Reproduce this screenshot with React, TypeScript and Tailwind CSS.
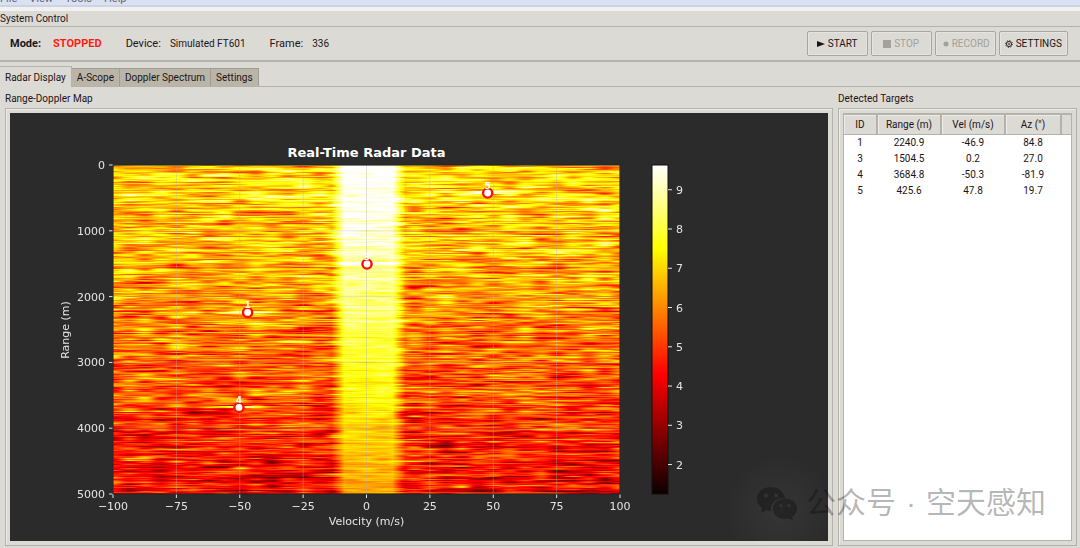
import { useLayoutEffect, useRef, type ReactNode } from "react";

const menus = ["File", "View", "Tools", "Help"];
const tabs = ["Radar Display", "A-Scope", "Doppler Spectrum", "Settings"];

const targets = [
  { id: 1, range: 2240.9, vel: -46.9, az: 84.8 },
  { id: 3, range: 1504.5, vel: 0.2, az: 27.0 },
  { id: 4, range: 3684.8, vel: -50.3, az: -81.9 },
  { id: 5, range: 425.6, vel: 47.8, az: 19.7 },
];

// plot area inside the 818x428 figure
const PLOT = { x: 103, y: 52, w: 507, h: 329 };
const V_MIN = 1.25;
const V_MAX = 9.63;

const xOf = (vel: number) => PLOT.x + ((vel + 100) / 200) * PLOT.w;
const yOf = (range: number) => PLOT.y + (range / 5000) * PLOT.h;
const barY = (v: number) => PLOT.y + ((V_MAX - v) / (V_MAX - V_MIN)) * PLOT.h;

const clamp = (n: number) => Math.max(0, Math.min(1, n));

// "hot" colour map
function hot(v: number) {
  const t = clamp((v - V_MIN) / (V_MAX - V_MIN));
  return [
    255 * clamp(0.04 + (t / 0.365) * 0.96),
    255 * clamp((t - 0.365) / 0.381),
    255 * clamp((t - 0.746) / 0.254),
  ];
}

function makeRandom(seed: number) {
  let s = seed;
  const next = () => {
    s = (s + 0x6d2b79f5) | 0;
    let t = Math.imul(s ^ (s >>> 15), 1 | s);
    t = (t + Math.imul(t ^ (t >>> 7), 61 | t)) ^ t;
    return ((t ^ (t >>> 14)) >>> 0) / 4294967296;
  };
  return () => next() + next() + next() + next() - 2;
}

function sample(row: number[], pos: number) {
  const i = Math.floor(pos);
  const f = pos - i;
  const s = f * f * (3 - 2 * f);
  return row[i] * (1 - s) + row[i + 1] * s;
}

function drawMap(ctx: CanvasRenderingContext2D) {
  const { w, h } = PLOT;
  const rand = makeRandom(336);
  const img = ctx.createImageData(w, h);
  let fine = Array.from({ length: 34 }, rand);
  let wide = Array.from({ length: 16 }, rand);

  for (let y = 0; y < h; y++) {
    const depth = y / h;
    const rowNoise = rand() * 0.5;
    fine = fine.map((p) => p * 0.45 + rand() * 1.05);
    wide = wide.map((p) => p * 0.3 + rand() * 0.8);
    for (let x = 0; x < w; x++) {
      const noise = sample(fine, (x / w) * 32) + sample(wide, (x / w) * 13 + 0.4) + rowNoise;
      const band = clamp((x - 218) / 13) * clamp((292 - x) / 13);
      const floor = 7.1 - 2.95 * Math.pow(depth, 1.3);
      const clutter = 9.8 - 3.5 * Math.pow(depth, 1.15);
      let v = (floor + noise) * (1 - band) + (clutter + noise * 0.38) * band;
      for (const t of targets) {
        const dx = x + PLOT.x - xOf(t.vel);
        const dy = y + PLOT.y - yOf(t.range) + 1;
        if (Math.abs(dy) < 1.2) v += 3.2 * Math.exp(-(dx * dx) / 700);
      }
      const [r, g, b] = hot(v);
      const k = (y * w + x) * 4;
      img.data[k] = r;
      img.data[k + 1] = g;
      img.data[k + 2] = b;
      img.data[k + 3] = 255;
    }
  }
  ctx.putImageData(img, 0, 0);
}

function RadarChart() {
  const ref = useRef<HTMLCanvasElement>(null);

  useLayoutEffect(() => {
    const ctx = ref.current?.getContext("2d");
    if (ctx) drawMap(ctx);
  }, []);

  const velTicks = [-100, -75, -50, -25, 0, 25, 50, 75, 100];
  const rangeTicks = [0, 1000, 2000, 3000, 4000, 5000];
  const bottom = PLOT.y + PLOT.h;

  return (
    <svg
      viewBox="0 0 818 428"
      className="block w-full h-auto font-['DejaVu_Sans',sans-serif] text-[11px]"
      fill="#e4e4e4"
      role="img"
      aria-label="Real-Time Radar Data"
    >
      <defs>
        <linearGradient id="hot" x1="0" y1="1" x2="0" y2="0">
          <stop offset="0" stopColor="#0b0000" />
          <stop offset="0.365" stopColor="#ff0000" />
          <stop offset="0.746" stopColor="#ffff00" />
          <stop offset="1" stopColor="#ffffff" />
        </linearGradient>
      </defs>

      <text x={xOf(0)} y="44" textAnchor="middle" fill="#fff" className="text-[13px] font-bold">
        Real-Time Radar Data
      </text>

      <foreignObject x={PLOT.x} y={PLOT.y} width={PLOT.w} height={PLOT.h}>
        <canvas ref={ref} width={PLOT.w} height={PLOT.h} className="block" />
      </foreignObject>

      {velTicks.map((v) => (
        <g key={v}>
          <path d={`M${xOf(v)} ${PLOT.y}V${bottom}`} stroke="#b0b0b0" strokeOpacity="0.4" />
          <path d={`M${xOf(v)} ${bottom}v4`} stroke="#e4e4e4" />
          <text x={xOf(v)} y={bottom + 16} textAnchor="middle">
            {String(v).replace("-", "−")}
          </text>
        </g>
      ))}
      {rangeTicks.map((r) => (
        <g key={r}>
          <path d={`M${PLOT.x} ${yOf(r)}h${PLOT.w}`} stroke="#b0b0b0" strokeOpacity="0.3" />
          <path d={`M${PLOT.x} ${yOf(r)}h-4`} stroke="#e4e4e4" />
          <text x={PLOT.x - 8} y={yOf(r) + 4} textAnchor="end">
            {r}
          </text>
        </g>
      ))}
      <rect x={PLOT.x} y={PLOT.y} width={PLOT.w} height={PLOT.h} fill="none" stroke="#111" />

      <text x={xOf(0)} y={bottom + 31} textAnchor="middle">
        Velocity (m/s)
      </text>
      <text transform="translate(59 217) rotate(-90)" textAnchor="middle">
        Range (m)
      </text>

      {targets.map((t) => (
        <g key={t.id}>
          <circle cx={xOf(t.vel)} cy={yOf(t.range)} r="4.6" fill="#fff" stroke="#f5140c" strokeWidth="2.4" />
          <text x={xOf(t.vel)} y={yOf(t.range) - 4} textAnchor="middle" fill="#fff" className="text-[9px] font-bold">
            {t.id}
          </text>
        </g>
      ))}

      <rect x="642" y={PLOT.y} width="16" height={PLOT.h} fill="url(#hot)" stroke="#111" />
      {[2, 3, 4, 5, 6, 7, 8, 9].map((v) => (
        <g key={v}>
          <path d={`M658 ${barY(v)}h4`} stroke="#e4e4e4" />
          <text x="666" y={barY(v) + 4}>
            {v}
          </text>
        </g>
      ))}
    </svg>
  );
}

function ControlButton({ icon, label, disabled }: { icon: ReactNode; label: string; disabled?: boolean }) {
  return (
    <button
      type="button"
      disabled={disabled}
      className="flex h-[25px] min-w-[61px] items-center justify-center gap-[3px] rounded-xs border border-[#a9a69e] px-[5px] shadow-[inset_0_0_0_1px_#e6e4df] disabled:text-[#a3a199]"
    >
      <svg viewBox="0 0 8 8" className="size-2" fill="currentColor" aria-hidden="true">
        {icon}
      </svg>
      {label}
    </button>
  );
}

const gear = (
  <g fill="none" stroke="currentColor">
    <circle cx="4" cy="4" r="2.6" strokeWidth="0.9" />
    <circle cx="4" cy="4" r="0.9" strokeWidth="0.6" />
    <circle cx="4" cy="4" r="3.500" strokeWidth="0.9" strokeDasharray="1.1 1.649" />
  </g>
);

function Targets() {
  const head = "h-5 border-r-2 border-b border-[#b5b2aa] bg-[#dcdad5] font-normal shadow-[inset_1px_1px_0_#eeece8]";
  return (
    <div className="flex flex-1 flex-col border border-t-2 border-[#b5b2aa] bg-white">
      <table className="w-full table-fixed border-separate border-spacing-0 text-center">
        <colgroup>
          <col className="w-[34px]" />
          <col className="w-16" />
          <col className="w-16" />
          <col className="w-14" />
          <col />
        </colgroup>
        <thead>
          <tr>
            <th className={head}>ID</th>
            <th className={head}>Range (m)</th>
            <th className={head}>Vel (m/s)</th>
            <th className={head}>Az (°)</th>
            <td className="border-b border-[#b5b2aa] bg-[#dcdad5]" />
          </tr>
        </thead>
        <tbody>
          {targets.map((t) => (
            <tr key={t.id} className="h-4 *:pr-[2px]">
              <td>{t.id}</td>
              <td>{t.range.toFixed(1)}</td>
              <td>{t.vel.toFixed(1)}</td>
              <td>{t.az.toFixed(1)}</td>
              <td />
            </tr>
          ))}
        </tbody>
      </table>
    </div>
  );
}

function Watermark() {
  return (
    <div className="pointer-events-none absolute right-[34px] bottom-[28px] flex items-center gap-2 text-black/30">
      <div className="absolute -left-8 -top-8 size-28 bg-radial from-white/5 to-transparent to-70%" />
      <svg viewBox="0 0 42 34" className="relative h-[34px] w-[42px]" fill="currentColor">
        <path
          fillRule="evenodd"
          d="M15 1C7 1 1 6.300 1 13c0 3.800 2 7 5 9.200L5 27l5.200-2.800c1.600.5 3.200.8 5 .8C14 17.500 20 12 28 12h1.300C28 5.600 22 1 15 1Zm-5 6.500a2 2 0 1 1 0 4 2 2 0 0 1 0-4Zm10 0a2 2 0 1 1 0 4 2 2 0 0 1 0-4Z"
        />
        <path
          fillRule="evenodd"
          d="M29 12.500c-7 0-12 4.500-12 10.200s5 10.300 12 10.300c1.500 0 2.800-.2 4-.5l4.200 2.200-1-3.700c2.900-1.800 4.800-4.800 4.800-8.300 0-5.700-5-10.200-12-10.200Zm-4 5.500a1.600 1.600 0 1 1 0 3.200 1.600 1.600 0 0 1 0-3.200Zm8 0a1.600 1.600 0 1 1 0 3.200 1.600 1.600 0 0 1 0-3.200Z"
        />
      </svg>
      <span className="relative flex gap-[10px] font-['Liberation_Sans','Noto_Sans_CJK_SC',sans-serif] text-[30px] leading-[30px]">
        <span>公众号</span>
        <span>·</span>
        <span>空天感知</span>
      </span>
    </div>
  );
}

export default function App() {
  const group = "flex border border-[#b5b2aa] p-1 shadow-[inset_1px_1px_0_#eeece8]";
  return (
    <div className="relative flex min-h-screen flex-col overflow-hidden bg-[#dcdad5] font-[Roboto,sans-serif] text-[10px] leading-3 text-[#1c1418]">
      <nav className="flex h-[5px] items-end gap-3 overflow-hidden bg-[#dae1f2] text-[11px] text-[#667]">
        {menus.map((m) => (
          <button key={m} type="button">
            {m}
          </button>
        ))}
      </nav>
      <div className="h-[6px] border-t-2 border-[#cdd3e2] bg-[#f1f1f1]" />

      <h2 className="flex h-[15px] items-center">System Control</h2>
      <div className="flex h-9 items-center border-t border-b-2 border-[#b5b2aa] pr-3 pl-[10px]">
        <div className="flex items-center gap-6 text-[11px]">
          <div className="flex gap-3 font-bold">
            <span>Mode:</span>
            <span className="text-[#ff1a10]">STOPPED</span>
          </div>
          <div className="flex gap-[9px]">
            <span>Device:</span>
            <span className="text-[10px]">Simulated FT601</span>
          </div>
          <div className="flex gap-[9px]">
            <span>Frame:</span>
            <span className="text-[10px]">336</span>
          </div>
        </div>
        <div className="ml-auto flex gap-[3px]">
          <ControlButton icon={<path d="M0 1l8 3-8 3Z" />} label="START" />
          <ControlButton icon={<path d="M0 0h8v8H0Z" />} label="STOP" disabled />
          <ControlButton icon={<circle cx="5" cy="4" r="2.500" />} label="RECORD" disabled />
          <ControlButton icon={gear} label="SETTINGS" />
        </div>
      </div>

      <div role="tablist" className="mt-1 flex h-[21px] items-end border-b border-[#b5b2aa]">
        {tabs.map((t, i) => (
          <button
            key={t}
            type="button"
            role="tab"
            aria-selected={i === 0}
            className={
              i === 0
                ? "-mb-px h-[21px] border-t border-r border-[#b5b2aa] bg-[#dcdad5] px-[5px] pt-[2px]"
                : "h-[18px] border-t border-r border-[#a09d94] bg-[#bab5a8] px-[5px] pt-px"
            }
          >
            {t}
          </button>
        ))}
      </div>

      <main className="flex flex-1 gap-[5px] pr-[3px] pb-[2px] pl-[5px]">
        <section className="flex min-w-0 flex-1 flex-col">
          <h2 className="flex h-[21px] items-center pt-[2px]">Range-Doppler Map</h2>
          <div className={`${group} flex-1`}>
            <div className="flex-1 bg-[#2b2b2b]">
              <RadarChart />
            </div>
          </div>
        </section>
        <section className="flex w-[239px] flex-col">
          <h2 className="flex h-[21px] items-center pt-[2px]">Detected Targets</h2>
          <div className={`${group} flex-1`}>
            <Targets />
          </div>
        </section>
      </main>

      <Watermark />
    </div>
  );
}
